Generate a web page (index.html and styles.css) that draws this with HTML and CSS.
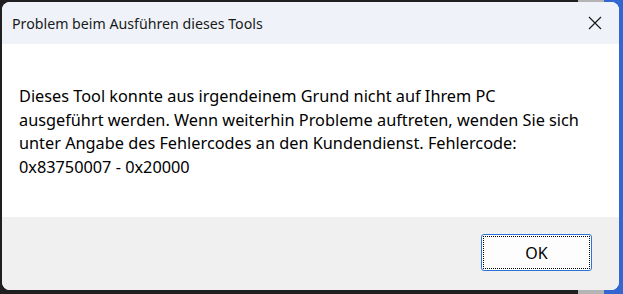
FILE: index.html
```html
<!DOCTYPE html>
<html lang="de">

<head>
    <meta charset="UTF-8">
    <meta name="viewport" content="width=device-width, initial-scale=1.0">
    <title>Problem beim Ausführen dieses Tools</title>
    <link rel="stylesheet" href="styles.css">
</head>

<body>
    <div class="dialog">
        <div class="title-bar">
            <span class="title">Problem beim Ausführen dieses Tools</span>
            <button class="close-btn" aria-label="Schließen">
                <svg width="14" height="14" viewBox="0 0 14 14">
                    <path d="M1 1 L13 13 M13 1 L1 13" stroke="#1b1b1b" stroke-width="1.2" fill="none" />
                </svg>
            </button>
        </div>
        <div class="content">
            <p class="message">
                Dieses Tool konnte aus irgendeinem Grund nicht auf Ihrem PC<br>
                ausgeführt werden. Wenn weiterhin Probleme auftreten, wenden Sie sich<br>
                unter Angabe des Fehlercodes an den Kundendienst. Fehlercode:<br>
                0x83750007 - 0x20000
            </p>
        </div>
        <div class="footer">
            <button class="ok-btn"><span>OK</span></button>
        </div>
    </div>
</body>

</html>
```

FILE: styles.css
```css
html,
body {
    margin: 0;
    padding: 0;
    width: 623px;
    height: 294px;
    overflow: hidden;
    background: linear-gradient(to right, #1f1f1f 578px, #b4b4b4 578px, #b4b4b4 604px, #3466d2 604px);
    font-family: "Noto Sans", "Open Sans", sans-serif;
}

.dialog {
    margin: 2px 0 0 2px;
    width: 617px;
    height: 288px;
    border-radius: 8px;
    overflow: hidden;
    display: flex;
    flex-direction: column;
    background: #fff;
}

.title-bar {
    height: 42px;
    flex: none;
    display: flex;
    align-items: center;
    justify-content: space-between;
    padding: 0 12px 0 10px;
    background: #eff3f9;
}

.title {
    font-size: 14.2px;
    color: #1a1a1a;
}

.close-btn {
    border: none;
    background: none;
    padding: 0;
    width: 14px;
    height: 14px;
    margin-right: 5px;
    display: flex;
}

.content {
    height: 173px;
    flex: none;
    box-sizing: border-box;
    padding: 41px 0 0 17px;
}

.message {
    margin: 0;
    font-size: 16.3px;
    line-height: 23.5px;
    color: #000;
    white-space: nowrap;
}

.footer {
    flex: 1;
    background: #f0f0f0;
    display: flex;
    justify-content: flex-end;
    align-items: flex-start;
    padding: 17px 27px 0 0;
}

.ok-btn {
    width: 111px;
    height: 37px;
    box-sizing: border-box;
    border: 1px solid #2a74d8;
    border-radius: 3px;
    background: #fdfdfd;
    padding: 1px;
    font-family: inherit;
    font-size: 16px;
    color: #000;
}

.ok-btn span {
    display: flex;
    align-items: center;
    justify-content: center;
    height: 100%;
    border: 1px dotted #000;
    box-sizing: border-box;
}
```
